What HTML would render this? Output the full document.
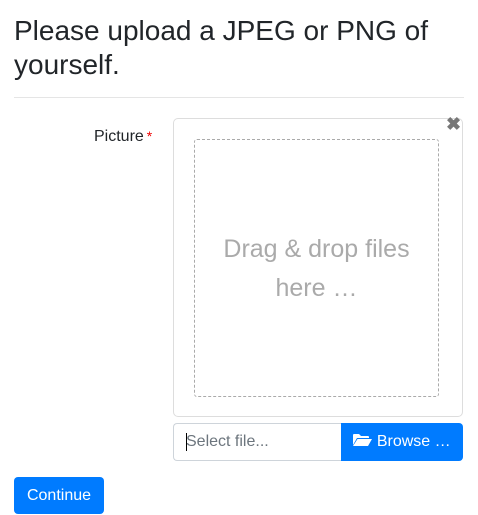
<!DOCTYPE html><html><head><style>
body{margin:0;width:478px;height:515px;font-family:"Liberation Sans",sans-serif;color:#212529;background:#fff;position:relative;overflow:hidden}
h1{position:absolute;left:14px;top:14px;margin:0;font-size:28px;font-weight:400;line-height:34px;width:460px}
.hr{position:absolute;left:14px;top:97px;width:450px;border-top:1px solid #e5e5e5}
.lbl{position:absolute;left:94px;top:128px;font-size:16px}
.lbl span{color:#e00;font-size:14px;vertical-align:top;margin-left:3px}
.box{position:absolute;left:173px;top:118px;width:288px;height:297px;border:1px solid #ddd;border-radius:5px}
.x{position:absolute;left:446px;top:114px;font-size:18px;font-weight:bold;color:#777}
.dz{position:absolute;left:194px;top:139px;width:245px;height:258px;border:1px dashed #aaa;border-radius:3px;color:#aaa;font-size:25px;text-align:center;line-height:39px;box-sizing:border-box;padding-top:90px}
.inp{position:absolute;left:173px;top:423px;height:36px;border:1px solid #ced4da;border-right:none;border-radius:4px 0 0 4px;font-size:16px;color:#6c757d;line-height:36px;padding-left:12px;width:156px}
.inp:before{content:"";position:absolute;left:12px;top:9px;height:18px;border-left:1px solid #000}
.br{position:absolute;left:341px;top:423px;width:122px;height:38px;background:#007bff;color:#fff;border-radius:0 4px 4px 0;font-size:16px;line-height:38px;text-align:center}
.btn{position:absolute;left:14px;top:477px;width:90px;height:37px;background:#007bff;color:#fff;border-radius:4px;font-size:16px;line-height:37px;text-align:center}
</style></head><body>
<h1>Please upload a JPEG or PNG of yourself.</h1>
<div class="hr"></div>
<div class="lbl">Picture<span>*</span></div>
<div class="box"></div>
<div class="x">✖</div>
<div class="dz">Drag &amp; drop files<br>here …</div>
<div class="inp">Select file...</div>
<div class="br"><svg width="19" height="14" viewBox="0 0 19 14" style="vertical-align:-1px"><path d="M0 2Q0 1 1 1H6L8 3H15Q16 3 16 4V5H4L0 12Z M4.5 6H19L15 13H0Z" fill="#fff"/></svg> Browse …</div>
<div class="btn">Continue</div>
</body></html>
